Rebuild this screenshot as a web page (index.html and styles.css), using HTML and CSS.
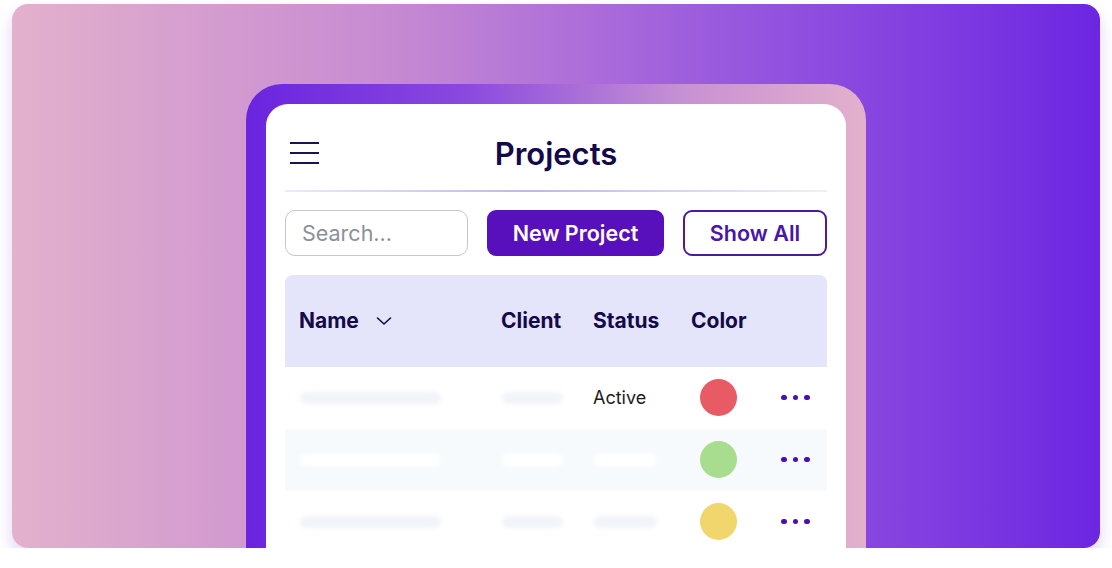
FILE: index.html
```html
<!DOCTYPE html>
<html lang="en">
<head>
    <meta charset="UTF-8">
    <meta name="viewport" content="width=device-width, initial-scale=1.0">
    <title>Projects</title>
    <link rel="stylesheet" href="styles.css">
</head>
<body>
    <div class="hero">
        <div class="phone">
            <div class="screen">
                <!-- header -->
                <div class="top-bar">
                    <div class="burger">
                        <span></span><span></span><span></span>
                    </div>
                    <div class="title">Projects</div>
                    <div></div>
                </div>
                <div class="divider"></div>

                <!-- toolbar -->
                <div class="toolbar">
                    <div class="search">Search...</div>
                    <div class="btn btn-main">New Project</div>
                    <div class="btn btn-line">Show All</div>
                </div>

                <!-- table -->
                <div class="table">
                    <div class="row head">
                        <div class="cell name-head">Name
                            <svg class="chev" width="16" height="10" viewBox="0 0 16 10"><polyline points="1.5,2 8,8 14.5,2" fill="none" stroke="#14094a" stroke-width="1.6" stroke-linecap="round" stroke-linejoin="round"/></svg>
                        </div>
                        <div class="cell">Client</div>
                        <div class="cell">Status</div>
                        <div class="cell">Color</div>
                        <div class="cell"></div>
                    </div>
                    <div class="row">
                        <div class="cell"><span class="ghost w-name"></span></div>
                        <div class="cell"><span class="ghost w-client"></span></div>
                        <div class="cell status">Active</div>
                        <div class="cell"><span class="dot red"></span></div>
                        <div class="cell"><span class="more"><i></i><i></i><i></i></span></div>
                    </div>
                    <div class="row alt">
                        <div class="cell"><span class="ghost w-name"></span></div>
                        <div class="cell"><span class="ghost w-client"></span></div>
                        <div class="cell"><span class="ghost w-status"></span></div>
                        <div class="cell"><span class="dot green"></span></div>
                        <div class="cell"><span class="more"><i></i><i></i><i></i></span></div>
                    </div>
                    <div class="row">
                        <div class="cell"><span class="ghost w-name"></span></div>
                        <div class="cell"><span class="ghost w-client"></span></div>
                        <div class="cell"><span class="ghost w-status"></span></div>
                        <div class="cell"><span class="dot yellow"></span></div>
                        <div class="cell"><span class="more"><i></i><i></i><i></i></span></div>
                    </div>
                </div>
            </div>
        </div>
    </div>
</body>
</html>
```

FILE: styles.css
```css
body {
    margin: 0;
    background: #fff;
    font-family: Inter, "Noto Sans", sans-serif;
}
.hero {
    margin: 4px 12px 0;
    height: 544px;
    border-radius: 16px;
    overflow: hidden;
    background: linear-gradient(90deg, #e3b1cc 0%, #c68ad2 35%, #9a5ade 65%, #6c26e2 100%);
    box-shadow: 0 8px 16px rgba(160, 110, 230, 0.3);
    display: flex;
    justify-content: center;
    padding-top: 80px;
    box-sizing: border-box;
}
.phone {
    width: 620px;
    padding: 20px 20px 0;
    box-sizing: border-box;
    border-radius: 36px 36px 0 0;
    background: linear-gradient(90deg, #6a24e0 0%, #8a48de 35%, #c690d4 70%, #e3b1cc 100%);
    display: flex;
}
.screen {
    flex: 1;
    background: #fff;
    border-radius: 22px 22px 0 0;
    padding: 0 19px;
}
.top-bar {
    display: grid;
    grid-template-columns: 1fr auto 1fr;
    align-items: center;
    height: 38px;
    padding: 30px 0 18px;
}
.burger {
    margin-left: 5px;
    width: 29px;
    display: flex;
    flex-direction: column;
    gap: 8px;
}
.burger span {
    height: 2px;
    background: #1c1450;
}
.title {
    font-size: 31px;
    font-weight: 600;
    color: #14094a;
}
.divider {
    height: 1.5px;
    background: linear-gradient(90deg, #eceaf8 0%, #bfb6ee 45%, #d6d0f3 70%, #f0f0f4 100%);
}
.toolbar {
    display: flex;
    gap: 19px;
    margin-top: 18px;
}
.search {
    width: 183px;
    height: 46px;
    box-sizing: border-box;
    border: 1.5px solid #c6c6c8;
    border-radius: 10px;
    padding-left: 16px;
    display: flex;
    align-items: center;
    font-size: 21.5px;
    color: #8c9098;
}
.btn {
    height: 46px;
    box-sizing: border-box;
    border-radius: 9px;
    display: flex;
    align-items: center;
    justify-content: center;
    font-size: 21.5px;
    font-weight: 600;
}
.btn-main {
    width: 177px;
    background: #5710bc;
    color: #fff;
}
.btn-line {
    width: 144px;
    border: 2px solid #4c1a9a;
    color: #4a16a8;
}
.table {
    margin-top: 19px;
}
.row {
    display: grid;
    grid-template-columns: 202px 92px 98px 80px 1fr;
    padding-left: 14px;
    height: 62px;
    align-items: center;
}
.row.head {
    height: 92px;
    background: #e4e4fa;
    border-radius: 8px 8px 0 0;
    font-size: 21px;
    font-weight: 700;
    color: #14094a;
}
.row.alt {
    background: #f7fafd;
}
.name-head {
    display: flex;
    align-items: center;
}
.chev {
    margin-left: 17px;
}
.status {
    font-size: 18px;
    color: #1c1c1c;
}
.ghost {
    display: block;
    height: 12px;
    border-radius: 6px;
    background: #f1f4f8;
    filter: blur(2px);
}
.alt .ghost {
    background: #fff;
}
.w-name {
    width: 141px;
    margin-left: 1px;
}
.w-client {
    width: 61px;
    margin-left: 1px;
}
.w-status {
    width: 64px;
}
.dot {
    display: block;
    width: 37px;
    height: 37px;
    border-radius: 50%;
    margin-left: 9px;
}
.red { background: #e85a64; }
.green { background: #a8dc8e; }
.yellow { background: #f0d66c; }
.more {
    display: flex;
    gap: 6px;
    margin-left: 10px;
}
.more i {
    width: 5.5px;
    height: 5.5px;
    border-radius: 50%;
    background: #4a0fae;
}
```
